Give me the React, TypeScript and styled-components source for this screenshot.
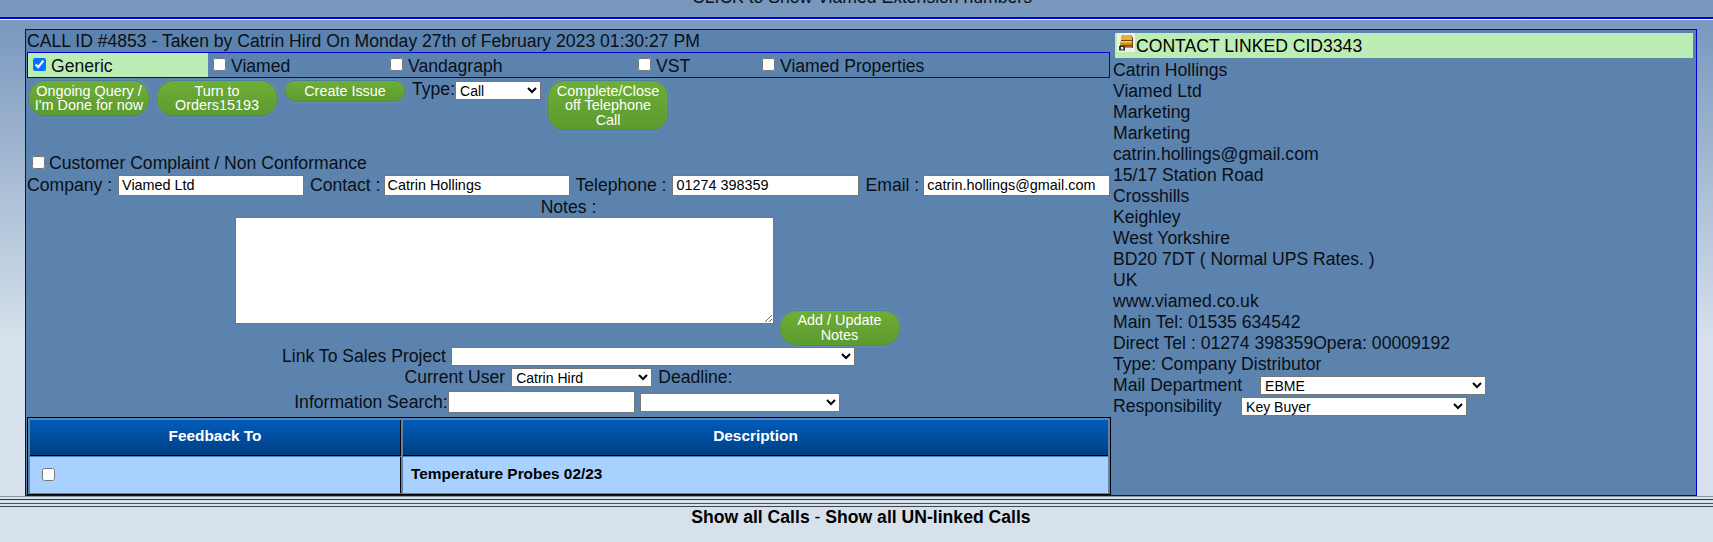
import styled, { createGlobalStyle } from 'styled-components'

const GlobalStyle = createGlobalStyle`
  html, body { margin: 0; padding: 0; }
  body {
    height: 542px;
    overflow: hidden;
    font-family: "Liberation Sans", Arial, sans-serif;
    font-size: 17.6px;
    color: #0a0f18;
    background: linear-gradient(#7897bc 0, #7c9abf 30px, #d6e1eb 340px);
  }
`

const TABS = [
  { label: 'Generic', checked: true },
  { label: 'Viamed' },
  { label: 'Vandagraph' },
  { label: 'VST' },
  { label: 'Viamed Properties' },
]

const CONTACT_LINES = [
  'Catrin Hollings',
  'Viamed Ltd',
  'Marketing',
  'Marketing',
  'catrin.hollings@gmail.com',
  '15/17 Station Road',
  'Crosshills',
  'Keighley',
  'West Yorkshire',
  'BD20 7DT ( Normal UPS Rates. )',
  'UK',
  'www.viamed.co.uk',
  'Main Tel: 01535 634542',
  'Direct Tel : 01274 398359Opera: 00009192',
  'Type: Company Distributor',
]

function ContactIcon() {
  return (
    <IconBox viewBox="0 0 18 19" width="18" height="19">
      <rect width="18" height="19" fill="#eef2e2" />
      <path d="M4 4q1-2 3-2h6q2 0 3 3v10H4z" fill="#6e430a" />
      <path d="M4 4q1-2 3-2h6q2 0 2 3v2H4z" fill="#e8b02f" />
      <path d="M3 8h12v7H3z" fill="#cf8f1f" />
      <path d="M3 8h12v1.5H3z" fill="#f2cf63" />
      <path d="M3 12h12v1.5H3z" fill="#7a4c0c" />
      <path d="M2 13h6v4.5H2z" fill="#2e343c" />
      <path d="M4 14h2.2v2.4H4z" fill="#ececec" />
    </IconBox>
  )
}

export default function App() {
  return (
    <>
      <GlobalStyle />
      <TopBar>
        <TopLink>CLICK to Show Viamed Extension numbers</TopLink>
      </TopBar>
      <BlueRule />
      <Panel>
        <FormColumn>
          <Title>CALL ID #4853 - Taken by Catrin Hird On Monday 27th of February 2023 01:30:27 PM</Title>
          <TabRow>
            {TABS.map((tab) => (
              <Tab key={tab.label} $active={!!tab.checked}>
                <TabCheck type="checkbox" defaultChecked={tab.checked} />
                {tab.label}
              </Tab>
            ))}
          </TabRow>
          <ActionRow>
            <PillButton>Ongoing Query / I'm Done for now</PillButton>
            <PillButton>Turn to Orders15193</PillButton>
            <PillButton>Create Issue</PillButton>
            <TypeField>
              Type:
              <TypeSelect defaultValue="Call">
                <option>Call</option>
              </TypeSelect>
            </TypeField>
            <PillButton>Complete/Close off Telephone Call</PillButton>
          </ActionRow>
          <ComplaintRow>
            <ComplaintCheck type="checkbox" />
            Customer Complaint / Non Conformance
          </ComplaintRow>
          <DetailsRow>
            <FieldLabel $after={6}>Company :</FieldLabel>
            <TextField $width={186} defaultValue="Viamed Ltd" />
            <FieldLabel $after={3}>Contact :</FieldLabel>
            <TextField $width={186} defaultValue="Catrin Hollings" />
            <FieldLabel $after={6}>Telephone :</FieldLabel>
            <TextField $width={187} defaultValue="01274 398359" />
            <FieldLabel $after={4}>Email :</FieldLabel>
            <TextField $width={187} defaultValue="catrin.hollings@gmail.com" />
          </DetailsRow>
          <NotesLabel>Notes :</NotesLabel>
          <NotesRow>
            <NotesArea />
            <PillButton>Add / Update Notes</PillButton>
          </NotesRow>
          <CentredRow $gap={5} $height={21}>
            Link To Sales Project
            <FormSelect $width={404} $height={19} />
          </CentredRow>
          <CentredRow $gap={6} $height={21}>
            Current User
            <FormSelect $width={141} $height={19} defaultValue="Catrin Hird">
              <option>Catrin Hird</option>
            </FormSelect>
            Deadline:
          </CentredRow>
          <SearchRow>
            Information Search:
            <TextField $width={187} $height={22} />
            <FormSelect $width={200} $height={19} $left={5} />
          </SearchRow>
          <FeedbackTable>
            <thead>
              <tr>
                <HeadCell $width={370}>Feedback To</HeadCell>
                <HeadCell>Description</HeadCell>
              </tr>
            </thead>
            <tbody>
              <tr>
                <BodyCell $divider>
                  <RowCheck type="checkbox" />
                </BodyCell>
                <BodyCell>Temperature Probes 02/23</BodyCell>
              </tr>
            </tbody>
          </FeedbackTable>
        </FormColumn>
        <ContactColumn>
          <ContactHeader>
            <ContactIcon />
            CONTACT LINKED CID3343
          </ContactHeader>
          <ContactList>
            {CONTACT_LINES.map((line, i) => (
              <div key={i}>{line}</div>
            ))}
            <ContactSelectRow $gap={18}>
              Mail Department
              <FormSelect $width={226} $height={19} defaultValue="EBME">
                <option>EBME</option>
              </FormSelect>
            </ContactSelectRow>
            <ContactSelectRow $gap={19.5}>
              Responsibility
              <FormSelect $width={226} $height={19} defaultValue="Key Buyer">
                <option>Key Buyer</option>
              </FormSelect>
            </ContactSelectRow>
          </ContactList>
        </ContactColumn>
      </Panel>
      <TripleRule />
      <FooterLinks>
        Show all Calls <FooterDash>-</FooterDash> Show all UN-linked Calls
      </FooterLinks>
    </>
  )
}

const TopBar = styled.div`
  height: 17px;
  overflow: hidden;
  display: flex;
  justify-content: center;
  align-items: flex-end;
`
const TopLink = styled.div`
  line-height: 21px;
  margin-bottom: -3px;
  margin-left: 11px;
  flex-shrink: 0;
  transform: translateY(-12px);
`
const BlueRule = styled.div`
  height: 2px;
  background: #0000d8;
  border-bottom: 1px solid #f2f6fa;
  margin-bottom: 9px;
`
const Panel = styled.div`
  box-sizing: border-box;
  width: 1672px;
  height: 467px;
  margin-left: 25px;
  border: 1px solid #0000d8;
  background: #5b83ad;
  display: flex;
`
const FormColumn = styled.div`
  width: 1083px;
  flex-shrink: 0;
  margin-left: 1px;
`
const Title = styled.div`
  line-height: 21px;
  padding-top: 1px;
`
const TabRow = styled.div`
  box-sizing: border-box;
  height: 26px;
  width: 1083px;
  border: 1px solid #0000d8;
  display: grid;
  grid-template-columns: 180px 177px 248px 124px 1fr;
`
const Tab = styled.label<{ $active: boolean }>`
  display: flex;
  align-items: center;
  background: ${(p) => (p.$active ? '#bbedb5' : 'transparent')};
  padding: 2px 0 0 5px;
`
const TabCheck = styled.input`
  margin: 0 5px 3px 0;
`
const ActionRow = styled.div`
  display: flex;
  align-items: flex-start;
  gap: 6px;
  margin: 2px 0 0 1px;
  height: 50px;
`
const PillButton = styled.button`
  box-sizing: border-box;
  width: 122px;
  flex-shrink: 0;
  padding: 2.75px 5px;
  border: 1px solid #4b7ea3;
  border-radius: 18px;
  background: linear-gradient(#6fae36, #5b9a2f);
  box-shadow: 0 0 2px #8aa5c2;
  color: #fff;
  font-family: inherit;
  font-size: 14.4px;
  line-height: 14.5px;
`
const TypeField = styled.div`
  display: flex;
  align-items: flex-start;
  line-height: 19px;
`
const TypeSelect = styled.select`
  box-sizing: border-box;
  width: 86px;
  height: 19px;
  margin-top: 1px;
  font-family: inherit;
  font-size: 14px;
  background: #fff;
  border-radius: 0;
`
const ComplaintRow = styled.label`
  display: flex;
  align-items: center;
  height: 21px;
  margin-top: 23px;
  padding-left: 5px;
`
const ComplaintCheck = styled.input`
  margin: 0 4px 3px 0;
`
const DetailsRow = styled.div`
  display: flex;
  align-items: center;
  height: 22px;
`
const FieldLabel = styled.span<{ $after: number }>`
  white-space: nowrap;
  margin-right: ${(p) => p.$after}px;
  input + & { margin-left: 6px; }
`
const TextField = styled.input<{ $width: number; $height?: number }>`
  box-sizing: border-box;
  width: ${(p) => p.$width}px;
  height: ${(p) => p.$height ?? 21}px;
  flex-shrink: 0;
  margin: 0;
  padding: 1px 3px;
  border: 1px solid #767676;
  border-radius: 0;
  background: #fff;
  font-family: inherit;
  font-size: 14.4px;
`
const NotesLabel = styled.div`
  text-align: center;
  line-height: 22px;
`
const NotesRow = styled.div`
  display: flex;
  justify-content: center;
  align-items: flex-end;
  gap: 5px;
  height: 128px;
  padding-right: 2px;
`
const NotesArea = styled.textarea`
  box-sizing: border-box;
  width: 539px;
  height: 107px;
  margin: 0 0 22px;
  padding: 2px;
  border: 1px solid #767676;
  background: #fff;
`
const CentredRow = styled.div<{ $gap: number; $height: number }>`
  display: flex;
  justify-content: center;
  align-items: center;
  gap: ${(p) => p.$gap}px;
  height: ${(p) => p.$height}px;
`
const SearchRow = styled.div`
  display: flex;
  justify-content: center;
  align-items: center;
  height: 24px;
  margin-top: 2px;
  padding-right: 3px;
`
const FormSelect = styled.select<{ $width: number; $height: number; $left?: number }>`
  box-sizing: border-box;
  width: ${(p) => p.$width}px;
  height: ${(p) => p.$height}px;
  margin-left: ${(p) => p.$left ?? 0}px;
  font-family: inherit;
  font-size: 14px;
  background: #fff;
  border-radius: 0;
`
const FeedbackTable = styled.table`
  box-sizing: border-box;
  width: 1084px;
  height: 77px;
  margin-top: 3px;
  padding-top: 1px;
  table-layout: fixed;
  border: 1px solid #000;
  border-spacing: 2px 1px;
`
const HeadCell = styled.th<{ $width?: number }>`
  width: ${(p) => (p.$width ? `${p.$width}px` : 'auto')};
  height: 32px;
  padding: 0 0 3px;
  background: linear-gradient(#005cbb, #003f82);
  border-bottom: 1px solid #000;
  border-right: 1px solid #000;
  color: #fff;
  font-size: 15.4px;
  text-align: center;
  &:last-child { border-right: 0; }
`
const BodyCell = styled.td<{ $divider?: boolean }>`
  height: 34px;
  padding: 0 0 2px 8px;
  background: #a8d1ff;
  border-right: ${(p) => (p.$divider ? '1px solid #000' : '0')};
  color: #000;
  font-size: 15.4px;
  font-weight: bold;
`
const RowCheck = styled.input`
  display: block;
  margin: 0 0 0 4px;
`
const ContactColumn = styled.div`
  flex: 1;
  padding: 3px 3px 0 3px;
`
const ContactHeader = styled.div`
  height: 25px;
  margin-left: 2px;
  background: #bbedb5;
  display: flex;
  align-items: flex-start;
  line-height: 26px;
  color: #000;
  padding-left: 2px;
  gap: 1px;
`
const IconBox = styled.svg`
  flex-shrink: 0;
`
const ContactList = styled.div`
  margin-top: 2px;
  line-height: 21px;
`
const ContactSelectRow = styled.div<{ $gap: number }>`
  display: flex;
  align-items: center;
  gap: ${(p) => p.$gap}px;
  height: 21px;
`
const TripleRule = styled.div`
  height: 9px;
  border-top: 1px solid #8a97a5;
  border-bottom: 1px solid #3e4650;
  background: linear-gradient(#d6e1eb 0 2px, #2c323a 2px 3px, #d6e1eb 3px 6px, #4a525c 6px 7px, #d6e1eb 7px);
`
const FooterLinks = styled.div`
  text-align: center;
  font-weight: bold;
  line-height: 21px;
  padding-left: 9px;
  color: #000;
`
const FooterDash = styled.span`
  font-weight: normal;
`
